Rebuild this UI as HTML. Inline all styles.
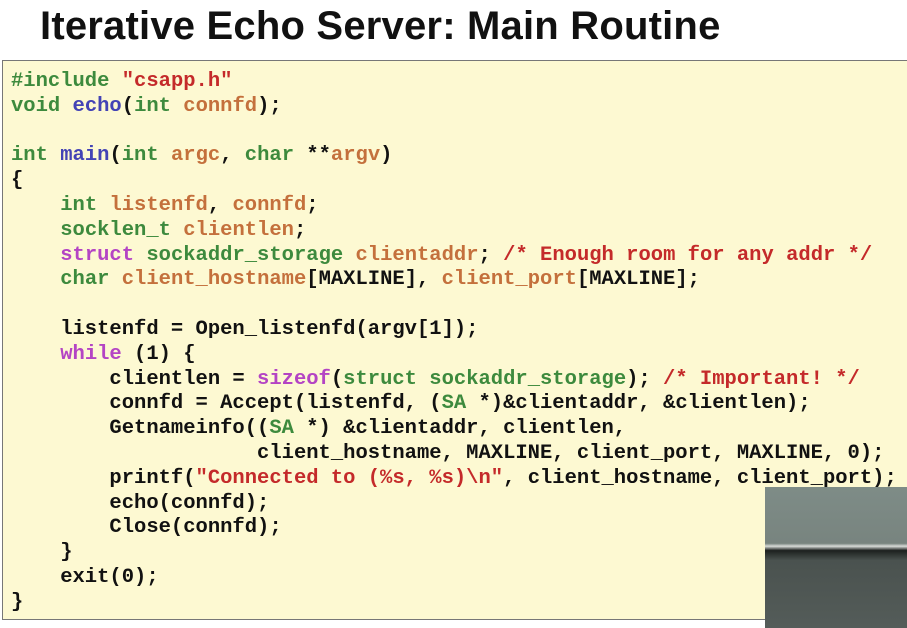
<!DOCTYPE html>
<html><head><meta charset="utf-8"><style>
html,body{margin:0;padding:0;width:907px;height:628px;overflow:hidden;background:#fff;}
.title{position:absolute;left:40px;top:4px;font:bold 40px "Liberation Sans",sans-serif;color:#111;letter-spacing:0.2px;white-space:nowrap;}
.box{position:absolute;left:2px;top:60px;width:920px;height:560px;background:#fdf9d2;border:1px solid #777;box-sizing:border-box;}
pre{position:absolute;left:11px;top:70px;margin:0;font:bold 20.5px/24.8px "Liberation Mono",monospace;color:#111;}
.g{color:#3d8a3d}.o{color:#c4703c}.b{color:#4343b5}.p{color:#b444c4}.r{color:#c42a2a}
.vid{position:absolute;left:765px;top:487px;width:142px;height:141px;background:linear-gradient(#7e8c87 0%,#78847f 40%,#d8dcd8 42%,#1c201e 45%,#4a524f 52%,#545c59 100%);}
</style></head><body>
<div class="title">Iterative Echo Server: Main Routine</div>
<div class="box"></div>
<pre><span class="g">#include</span> <span class="r">"csapp.h"</span>
<span class="g">void</span> <span class="b">echo</span>(<span class="g">int</span> <span class="o">connfd</span>);

<span class="g">int</span> <span class="b">main</span>(<span class="g">int</span> <span class="o">argc</span>, <span class="g">char</span> **<span class="o">argv</span>)
{
    <span class="g">int</span> <span class="o">listenfd</span>, <span class="o">connfd</span>;
    <span class="g">socklen_t</span> <span class="o">clientlen</span>;
    <span class="p">struct</span> <span class="g">sockaddr_storage</span> <span class="o">clientaddr</span>; <span class="r">/* Enough room for any addr */</span>
    <span class="g">char</span> <span class="o">client_hostname</span>[MAXLINE], <span class="o">client_port</span>[MAXLINE];

    listenfd = Open_listenfd(argv[1]);
    <span class="p">while</span> (1) {
        clientlen = <span class="p">sizeof</span>(<span class="g">struct sockaddr_storage</span>); <span class="r">/* Important! */</span>
        connfd = Accept(listenfd, (<span class="g">SA</span> *)&amp;clientaddr, &amp;clientlen);
        Getnameinfo((<span class="g">SA</span> *) &amp;clientaddr, clientlen,
                    client_hostname, MAXLINE, client_port, MAXLINE, 0);
        printf(<span class="r">"Connected to (%s, %s)\n"</span>, client_hostname, client_port);
        echo(connfd);
        Close(connfd);
    }
    exit(0);
}</pre>
<div class="vid"></div>
</body></html>
